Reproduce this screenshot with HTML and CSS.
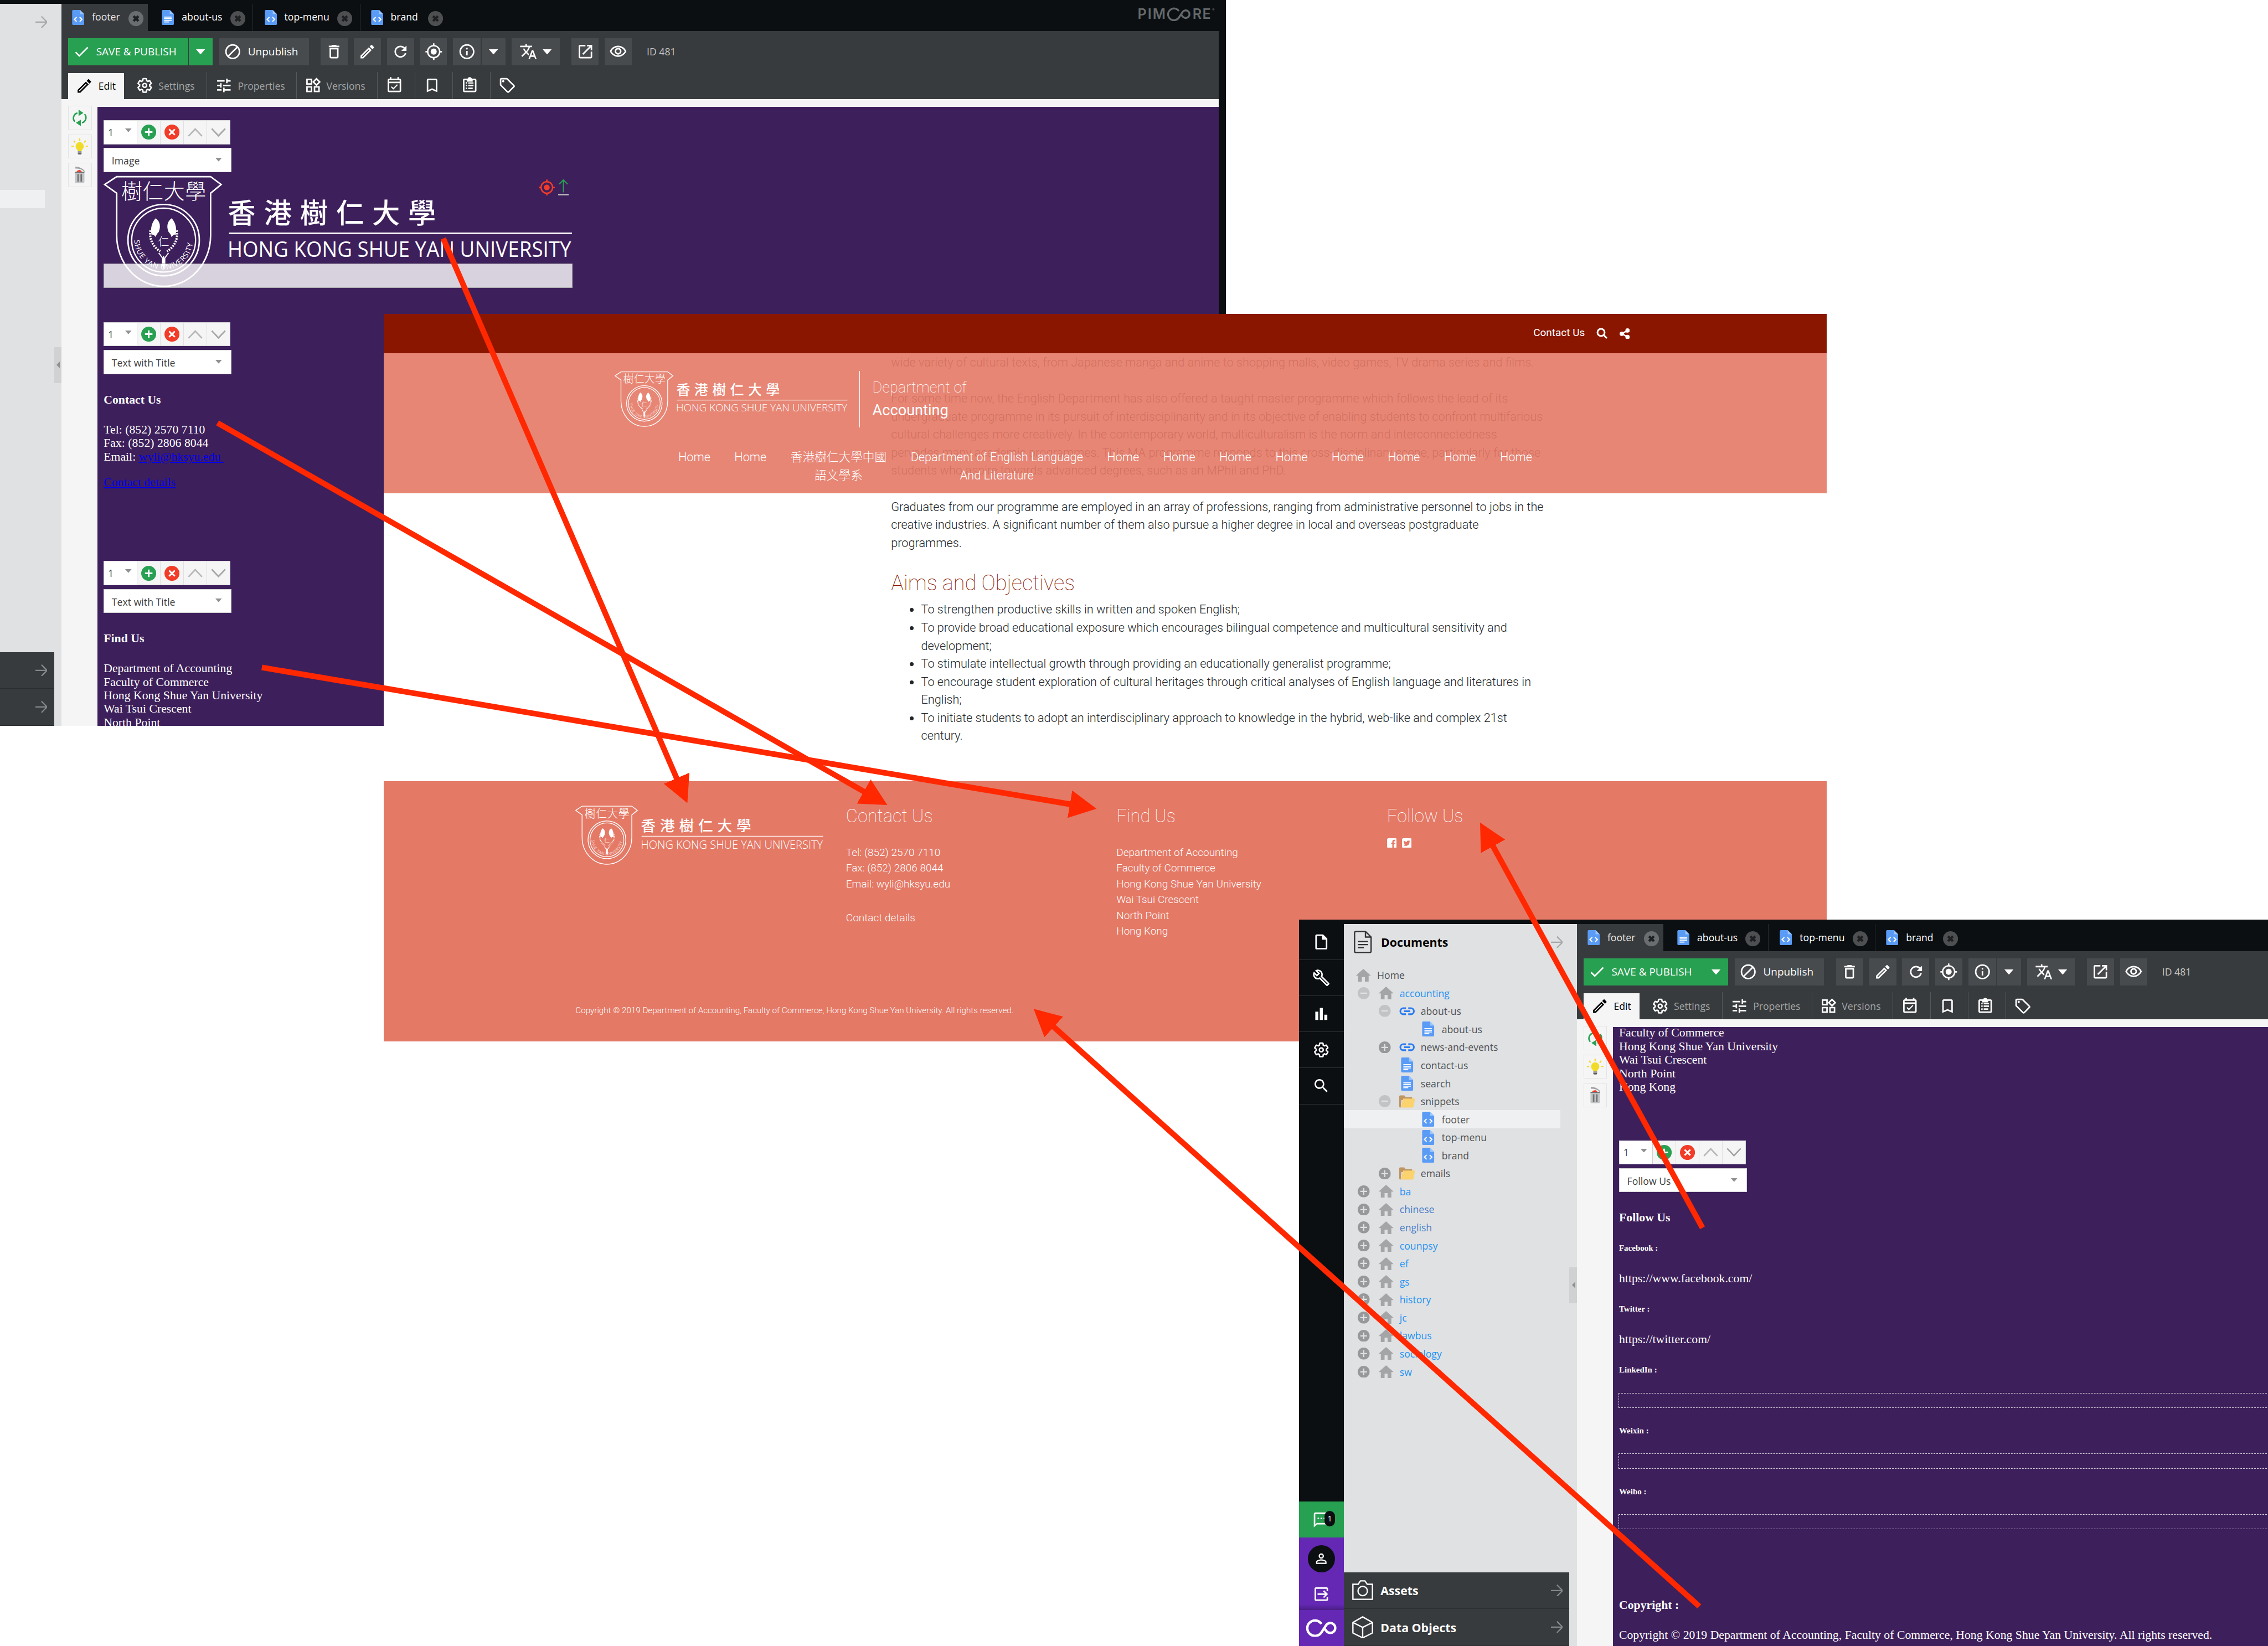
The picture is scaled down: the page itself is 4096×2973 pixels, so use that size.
FILE: index.html
```html
<!DOCTYPE html>
<html lang="en">
<head>
<meta charset="utf-8">
<title>Footer snippet guide</title>
<link rel="stylesheet" href="styles.css">
</head>
<body>
<svg class="defs" aria-hidden="true">
  <symbol id="i-check" viewBox="0 0 24 24"><path d="M9 16.2L4.8 12l-1.4 1.4L9 19 21 7l-1.4-1.4L9 16.2z"/></symbol>
  <symbol id="i-block" viewBox="0 0 24 24"><path d="M12 2C6.48 2 2 6.48 2 12s4.48 10 10 10 10-4.48 10-10S17.52 2 12 2zM4 12c0-4.42 3.58-8 8-8 1.85 0 3.55.63 4.9 1.69L5.69 16.9C4.63 15.55 4 13.85 4 12zm8 8c-1.85 0-3.55-.63-4.9-1.69L18.31 7.1C19.37 8.45 20 10.15 20 12c0 4.42-3.58 8-8 8z"/></symbol>
  <symbol id="i-trash" viewBox="0 0 24 24"><path d="M6 19c0 1.1.9 2 2 2h8c1.1 0 2-.9 2-2V7H6v12zM8 9h8v10H8V9zm7.5-5l-1-1h-5l-1 1H5v2h14V4z"/></symbol>
  <symbol id="i-edit" viewBox="0 0 24 24"><path d="M14.06 9.02l.92.92L5.92 19H5v-.92l9.06-9.06M17.66 3c-.25 0-.51.1-.7.29l-1.83 1.83 3.75 3.75 1.83-1.83c.39-.39.39-1.02 0-1.41l-2.34-2.34c-.2-.2-.45-.29-.71-.29zm-3.6 3.19L3 17.25V21h3.75L17.81 9.94l-3.75-3.75z"/></symbol>
  <symbol id="i-refresh" viewBox="0 0 24 24"><path d="M17.65 6.35C16.2 4.9 14.21 4 12 4c-4.42 0-7.99 3.58-7.99 8s3.57 8 7.99 8c3.73 0 6.84-2.55 7.73-6h-2.08c-.82 2.33-3.04 4-5.65 4-3.31 0-6-2.69-6-6s2.69-6 6-6c1.66 0 3.14.69 4.22 1.78L13 11h7V4l-2.35 2.35z"/></symbol>
  <symbol id="i-target" viewBox="0 0 24 24"><path d="M12 8c-2.21 0-4 1.79-4 4s1.79 4 4 4 4-1.79 4-4-1.79-4-4-4zm8.94 3c-.46-4.17-3.77-7.48-7.94-7.94V1h-2v2.06C6.83 3.52 3.52 6.83 3.06 11H1v2h2.06c.46 4.17 3.77 7.48 7.94 7.94V23h2v-2.06c4.17-.46 7.48-3.77 7.94-7.94H23v-2h-2.06zM12 19c-3.87 0-7-3.13-7-7s3.13-7 7-7 7 3.13 7 7-3.13 7-7 7z"/></symbol>
  <symbol id="i-info" viewBox="0 0 24 24"><path d="M11 7h2v2h-2zm0 4h2v6h-2zm1-9C6.48 2 2 6.48 2 12s4.48 10 10 10 10-4.48 10-10S17.52 2 12 2zm0 18c-4.41 0-8-3.59-8-8s3.59-8 8-8 8 3.59 8 8-3.59 8-8 8z"/></symbol>
  <symbol id="i-translate" viewBox="0 0 24 24"><path d="M12.87 15.07l-2.54-2.51.03-.03c1.74-1.94 2.98-4.17 3.71-6.53H17V4h-7V2H8v2H1v1.99h11.17C11.5 7.92 10.44 9.75 9 11.35 8.07 10.32 7.3 9.19 6.69 8h-2c.73 1.63 1.73 3.17 2.98 4.56l-5.09 5.02L4 19l5-5 3.11 3.11.76-2.04zM18.5 10h-2L12 22h2l1.12-3h4.75L21 22h2l-4.5-12zm-2.62 7l1.62-4.33L19.12 17h-3.24z"/></symbol>
  <symbol id="i-open" viewBox="0 0 24 24"><path d="M19 19H5V5h7V3H5c-1.11 0-2 .9-2 2v14c0 1.1.89 2 2 2h14c1.1 0 2-.9 2-2v-7h-2v7zM14 3v2h3.59l-9.83 9.83 1.41 1.41L19 6.41V10h2V3h-7z"/></symbol>
  <symbol id="i-eye" viewBox="0 0 24 24"><path d="M12 6c3.79 0 7.17 2.13 8.82 5.5C19.17 14.87 15.79 17 12 17s-7.17-2.13-8.82-5.5C4.83 8.13 8.21 6 12 6m0-2C7 4 2.73 7.11 1 11.5 2.73 15.89 7 19 12 19s9.27-3.11 11-7.5C21.27 7.11 17 4 12 4zm0 5c1.38 0 2.5 1.12 2.5 2.5S13.38 14 12 14s-2.5-1.12-2.5-2.5S10.62 9 12 9m0-2c-2.48 0-4.5 2.02-4.5 4.5S9.52 16 12 16s4.5-2.02 4.5-4.5S14.48 7 12 7z"/></symbol>
  <symbol id="i-gear" viewBox="0 0 24 24"><g fill="none" stroke="currentColor" stroke-width="2.1" transform="translate(1.2 1.2) scale(.9)"><path d="M19.43 12.98c.04-.32.07-.64.07-.98s-.03-.66-.07-.98l2.11-1.65c.19-.15.24-.42.12-.64l-2-3.46c-.12-.22-.39-.3-.61-.22l-2.49 1c-.52-.4-1.08-.73-1.69-.98l-.38-2.65C14.46 2.18 14.25 2 14 2h-4c-.25 0-.46.18-.49.42l-.38 2.65c-.61.25-1.17.59-1.69.98l-2.49-1c-.23-.09-.49 0-.61.22l-2 3.46c-.13.22-.07.49.12.64l2.11 1.65c-.04.32-.07.65-.07.98s.03.66.07.98l-2.11 1.65c-.19.15-.24.42-.12.64l2 3.46c.12.22.39.3.61.22l2.49-1c.52.4 1.08.73 1.69.98l.38 2.65c.03.24.24.42.49.42h4c.25 0 .46-.18.49-.42l.38-2.65c.61-.25 1.17-.59 1.69-.98l2.49 1c.23.09.49 0 .61-.22l2-3.46c.12-.22.07-.49-.12-.64l-2.11-1.65z"/><circle cx="12" cy="12" r="2.9"/></g></symbol>
  <symbol id="i-tune" viewBox="0 0 24 24"><path d="M3 17v2h6v-2H3zM3 5v2h10V5H3zm10 16v-2h8v-2h-8v-2h-2v6h2zM7 9v2H3v2h4v2h2V9H7zm14 4v-2H11v2h10zm-6-4h2V7h4V5h-4V3h-2v6z"/></symbol>
  <symbol id="i-widgets" viewBox="0 0 24 24"><path d="M16.66 4.52l2.83 2.83-2.83 2.83-2.83-2.83 2.83-2.83M9 5v4H5V5h4m10 10v4h-4v-4h4M9 15v4H5v-4h4m7.66-13.31L11 7.34 16.66 13l5.66-5.66-5.66-5.65zM11 3H3v8h8V3zm10 10h-8v8h8v-8zm-10 0H3v8h8v-8z"/></symbol>
  <symbol id="i-calendar" viewBox="0 0 24 24"><path fill-rule="evenodd" d="M16.53 11.56L15.47 10.5l-4.88 4.88-2.12-2.12-1.06 1.06L10.59 17.5l5.94-5.94zM19 3h-1V1h-2v2H8V1H6v2H5c-1.1 0-2 .9-2 2v14c0 1.1.9 2 2 2h14c1.1 0 2-.9 2-2V5c0-1.1-.9-2-2-2zm0 16H5V9h14v10zM5 5h14v2H5z"/></symbol>
  <symbol id="i-bookmark" viewBox="0 0 24 24"><path d="M17 3H7c-1.1 0-1.99.9-1.99 2L5 21l7-3 7 3V5c0-1.1-.9-2-2-2zm0 15l-5-2.18L7 18V5h10v13z"/></symbol>
  <symbol id="i-clipboard" viewBox="0 0 24 24"><path fill-rule="evenodd" d="M10 15h6v2h-6zM10 11h7v2h-7zM10 8h7v1.500h-7zM6.800 15h1.800v2H6.800zM6.800 11h1.800v2H6.800zM6.800 7.500h1.800v2H6.800zM19 3h-4.180C14.4 1.840 13.3 1 12 1c-1.300 0-2.400.84-2.820 2H5c-1.100 0-2 .9-2 2v14c0 1.100.9 2 2 2h14c1.100 0 2-.9 2-2V5c0-1.100-.9-2-2-2zm0 16H5V5h3v2h8V5h3v14z"/></symbol>
  <symbol id="i-tag" viewBox="0 0 24 24"><path d="M21.41 11.58l-9-9C12.05 2.22 11.55 2 11 2H4c-1.1 0-2 .9-2 2v7c0 .55.22 1.05.59 1.42l9 9c.36.36.86.58 1.41.58s1.05-.22 1.41-.59l7-7c.37-.36.59-.86.59-1.41s-.23-1.06-.59-1.42zM13 20.01L4 11V4h7v-.01l9 9-7 7.02z"/><circle cx="6.500" cy="6.500" r="1.500"/></symbol>
  <symbol id="i-wrench" viewBox="0 0 24 24"><path d="M22.61 18.99l-9.08-9.08c.93-2.34.45-5.1-1.44-7C9.79.61 6.21.4 3.66 2.26L7.5 6.11 6.08 7.52 2.25 3.69C.39 6.23.6 9.82 2.9 12.11c1.86 1.86 4.57 2.35 6.89 1.48l9.11 9.11c.39.39 1.02.39 1.41 0l2.3-2.3c.4-.38.4-1.01 0-1.41zm-3 1.6l-9.46-9.46c-.61.45-1.29.72-2 .82-1.36.2-2.79-.21-3.83-1.25C3.37 9.76 2.93 8.5 3 7.26l3.09 3.09 4.24-4.24-3.09-3.09c1.24-.07 2.49.37 3.44 1.31 1.08 1.08 1.49 2.57 1.24 3.96-.12.71-.42 1.37-.88 1.96l9.45 9.45-.88.89z"/></symbol>
  <symbol id="i-search" viewBox="0 0 24 24"><path d="M15.5 14h-.79l-.28-.27C15.41 12.59 16 11.11 16 9.500 16 5.91 13.09 3 9.500 3S3 5.91 3 9.500 5.91 16 9.500 16c1.61 0 3.09-.59 4.23-1.57l.27.28v.79l5 4.99L20.49 19l-4.99-5zm-6 0C7.01 14 5 11.99 5 9.500S7.01 5 9.500 5 14 7.01 14 9.500 11.99 14 9.500 14z"/></symbol>
  <symbol id="i-page" viewBox="0 0 24 24"><path fill="none" stroke="currentColor" stroke-width="2" d="M14 3H6a1 1 0 0 0-1 1v16a1 1 0 0 0 1 1h12a1 1 0 0 0 1-1V8z"/><path d="M13 3v6h6z"/></symbol>
  <symbol id="i-bars" viewBox="0 0 24 24"><path d="M4 9h4v11H4zM10 4h4v16h-4zM16 13h4v7h-4z"/></symbol>
  <symbol id="i-sms" viewBox="0 0 24 24"><path d="M20 2H4c-1.100 0-2 .9-2 2v18l4-4h14c1.100 0 2-.9 2-2V4c0-1.100-.9-2-2-2zm0 14H6l-2 2V4h16v12zM7 9h2v2H7zM11 9h2v2h-2zM15 9h2v2h-2z"/></symbol>
  <symbol id="i-person" viewBox="0 0 24 24"><path d="M12 5.900c1.160 0 2.100.94 2.100 2.100s-.94 2.100-2.100 2.100S9.900 9.160 9.900 8s.94-2.100 2.100-2.100m0 9c2.970 0 6.100 1.460 6.100 2.100v1.100H5.900V17c0-.64 3.130-2.100 6.100-2.100M12 4C9.790 4 8 5.790 8 8s1.790 4 4 4 4-1.790 4-4-1.790-4-4-4zm0 9c-2.670 0-8 1.340-8 4v3h16v-3c0-2.660-5.330-4-8-4z"/></symbol>
  <symbol id="i-exit" viewBox="0 0 24 24"><path fill="none" stroke="currentColor" stroke-width="2" d="M20 8V5a1 1 0 0 0-1-1H5a1 1 0 0 0-1 1v14a1 1 0 0 0 1 1h14a1 1 0 0 0 1-1v-3M7 12h12M15 7.500l4.500 4.500-4.500 4.500"/></symbol>
  <symbol id="i-arrow" viewBox="0 0 32 32"><path fill="none" stroke="currentColor" stroke-width="3.500" d="M0 16h30M16 1l15 15-15 15"/></symbol>
  <symbol id="i-caret" viewBox="0 0 24 14"><path d="M0 0h24L12 14z"/></symbol>
  <symbol id="i-close" viewBox="0 0 40 40"><circle cx="20" cy="20" r="20"/><path d="M13.500 13.500l13 13M26.500 13.500l-13 13" stroke="#1d2022" stroke-width="6.500"/></symbol>
  <symbol id="i-snippet" viewBox="0 0 32 40"><path fill="#5a9cf5" d="M3 0h18l11 11v26a3 3 0 0 1-3 3H3a3 3 0 0 1-3-3V3a3 3 0 0 1 3-3z"/><path fill="#9cc5ff" d="M21 0l11 11H21z"/><path fill="none" stroke="#fff" stroke-width="3" d="M12 19l-6 6 6 6M20 19l6 6-6 6"/></symbol>
  <symbol id="i-doc" viewBox="0 0 32 40"><path fill="#5a9cf5" d="M3 0h18l11 11v26a3 3 0 0 1-3 3H3a3 3 0 0 1-3-3V3a3 3 0 0 1 3-3z"/><path fill="#9cc5ff" d="M21 0l11 11H21z"/><path fill="none" stroke="#fff" stroke-width="2.500" d="M6 19h20M6 23.500h20M6 28h20M6 32h13"/></symbol>
  <symbol id="i-house" viewBox="0 0 40 34"><path d="M20 0l20 18h-6v16H24V22h-8v12H6V18H0z"/></symbol>
  <symbol id="i-link" viewBox="0 0 42 22"><g fill="none" stroke="#2a7cf0" stroke-width="4.500"><path d="M18 3h-7a8 8 0 0 0 0 16h7M24 3h7a8 8 0 0 1 0 16h-7M13 11h16"/></g></symbol>
  <symbol id="i-folder" viewBox="0 0 44 34"><path fill="#bf9564" d="M0 3a3 3 0 0 1 3-3h11l4 5h18v8H6L4 34H3a3 3 0 0 1-3-3z"/><path fill="#fad26e" d="M11 9h33l-4 22a3 3 0 0 1-3 3H5z"/></symbol>
  <symbol id="i-plus" viewBox="0 0 32 32"><circle cx="16" cy="16" r="16"/><path stroke="#e0e1e3" stroke-width="3.500" d="M16 7v18M7 16h18"/></symbol>
  <symbol id="i-minus" viewBox="0 0 32 32"><circle cx="16" cy="16" r="16"/><path stroke="#e0e1e3" stroke-width="3.500" d="M7 16h18"/></symbol>
  <symbol id="i-add" viewBox="0 0 40 40"><circle cx="20" cy="20" r="20" fill="#28a052"/><path stroke="#fff" stroke-width="4.500" d="M20 10v20M10 20h20"/></symbol>
  <symbol id="i-remove" viewBox="0 0 40 40"><circle cx="20" cy="20" r="20" fill="#f23c28"/><path stroke="#fff" stroke-width="4.500" d="M12.500 12.500l15 15M27.500 12.500l-15 15"/></symbol>
  <symbol id="i-up" viewBox="0 0 40 24"><path fill="none" stroke="#b6b7b8" stroke-width="4" d="M2 22L20 3l18 19"/></symbol>
  <symbol id="i-down" viewBox="0 0 40 24"><path fill="none" stroke="#a3a5a7" stroke-width="4" d="M2 2l18 19L38 2"/></symbol>
  <symbol id="i-sync" viewBox="0 0 44 44"><g fill="none" stroke="#28a052" stroke-width="4"><path d="M9 32A14 14 0 0 1 16 9M35 12a14 14 0 0 1-7 23"/></g><path fill="#28a052" d="M19 0l13 9-13 8zM25 44l-13-9 13-8z"/></symbol>
  <symbol id="i-bulb" viewBox="0 0 44 44"><path fill="#f0dc28" d="M22 10a11 11 0 0 1 11 11c0 6-5 8-6 13H17c-1-5-6-7-6-13a11 11 0 0 1 11-11z"/><path fill="none" stroke="#f0dc28" stroke-width="3.500" d="M22 0v7M6 6l4 5M38 6l-4 5M0 21h6M38 21h6"/><path fill="#9a9c9e" d="M17 34h10v4H17zM18 41h8v3h-8z"/><path fill="#4d5052" d="M17 38h10v3H17z"/></symbol>
  <symbol id="i-bin" viewBox="0 0 30 42"><path fill="#c2c4c5" d="M3 16h24v23a3 3 0 0 1-3 3H6a3 3 0 0 1-3-3z"/><path fill="#f23c28" d="M7 13c2-5 6-3 7-5 3 1 5 2 7 5z"/><path fill="#707274" d="M3 13h24v3H3zM9 19h4v19H9zM17 19h4v19h-4z"/><path fill="#a0a2a4" d="M4 0c10 0 22 6 24 12l-2 1C22 7 14 5 4 5z"/></symbol>
  <symbol id="i-infinity" viewBox="0 0 81 48"><path fill="none" stroke="currentColor" stroke-width="6.500" d="M40.500 13.500A20.500 20.500 0 1 0 40.500 36L54 15.700A13.200 13.200 0 1 1 54.200 32.800L49.500 27"/></symbol>
  <symbol id="logo" viewBox="0 0 1246 298">
    <g fill="none" stroke="currentColor" stroke-width="4">
      <path d="M34 3H284L312 24 284 47V160A125 135 0 0 1 34 160V47L2 24Z"/>
      <circle cx="159" cy="172" r="95"/><circle cx="159" cy="172" r="85" stroke-width="3.500"/>
      <path d="M333 154H1246"/>
      <path stroke-width="3" d="M146 206l10 14v22M172 206l-10 14v22M159 214v34"/>
      <path stroke-width="6" stroke-dasharray="4 3" d="M124 146c-4 20 4 42 26 56M194 146c4 20-4 42-26 56"/>
    </g>
    <g fill="currentColor">
      <path d="M138 114c13 10 13 24 8 36-3 4-6 6-8 14-4-6-8-8-11-6-4-14 0-34 11-44zM180 114c-13 10-13 24-8 36 3 4 6 6 8 14 4-6 8-8 11-6 4-14 0-34-11-44z"/>
      <text x="159" y="187" font-size="30" text-anchor="middle" class="logo-serif">仁</text>
      <text x="46" y="62" font-size="56" textLength="226" class="logo-serif">樹仁大學</text>
      <text x="330" y="127" font-size="74" letter-spacing="22" class="logo-cjk">香港樹仁大學</text>
      <text x="329" y="216" font-size="56" textLength="915" lengthAdjust="spacingAndGlyphs" class="logo-latin">HONG KONG SHUE YAN UNIVERSITY</text>
      <path id="seal" fill="none" d="M81 172A78 78 0 0 0 237 172"/>
      <text font-size="20" class="logo-latin"><textPath href="#seal" textLength="236">SHUE YAN UNIVERSITY</textPath></text>
    </g>
  </symbol>
</svg>

<main class="canvas">

  <!-- Footer snippet editor, top of the document -->
  <section class="editor editor-top">
    <nav class="rail"></nav>
    <aside class="tree">
      <header class="tree-head"><svg class="go"><use href="#i-arrow"/></svg></header>
      <ul class="nodes"><li class="node blank"></li><li class="node blank"></li><li class="node blank"></li><li class="node blank"></li><li class="node blank"></li><li class="node blank"></li><li class="node blank"></li><li class="node blank"></li><li class="node selected"></li></ul>
      <div class="drawer"><svg class="go"><use href="#i-arrow"/></svg></div>
      <div class="drawer"><svg class="go"><use href="#i-arrow"/></svg></div>
    </aside>
    <div class="split"><span class="handle"></span></div>
    <div class="work">
      <div class="tabs">
        <div class="tab active"><svg class="file"><use href="#i-snippet"/></svg><span>footer</span><svg class="x"><use href="#i-close"/></svg></div>
        <div class="tab wide"><svg class="file"><use href="#i-doc"/></svg><span>about-us</span><svg class="x"><use href="#i-close"/></svg></div>
        <div class="tab"><svg class="file"><use href="#i-snippet"/></svg><span>top-menu</span><svg class="x"><use href="#i-close"/></svg></div>
        <div class="tab last"><svg class="file"><use href="#i-snippet"/></svg><span>brand</span><svg class="x"><use href="#i-close"/></svg></div>
        <div class="brand"><span class="pim">PIM</span><svg class="co"><use href="#i-infinity"/></svg><span class="re">RE</span><sup>®</sup></div>
      </div>
      <div class="bars">
        <div class="toolbar">
          <div class="btn save"><svg class="ic"><use href="#i-check"/></svg><span>SAVE &amp; PUBLISH</span></div><div class="btn save drop"><svg class="caret"><use href="#i-caret"/></svg></div>
          <div class="btn unpublish"><svg class="ic"><use href="#i-block"/></svg><span>Unpublish</span></div>
          <div class="btn sq far"><svg class="ic"><use href="#i-trash"/></svg></div>
          <div class="btn sq"><svg class="ic"><use href="#i-edit"/></svg></div>
          <div class="btn sq"><svg class="ic"><use href="#i-refresh"/></svg></div>
          <div class="btn sq"><svg class="ic"><use href="#i-target"/></svg></div>
          <div class="btn sq info"><svg class="ic"><use href="#i-info"/></svg></div><div class="btn drop"><svg class="caret"><use href="#i-caret"/></svg></div>
          <div class="btn lang"><svg class="ic"><use href="#i-translate"/></svg><svg class="caret"><use href="#i-caret"/></svg></div>
          <div class="btn sq far"><svg class="ic"><use href="#i-open"/></svg></div>
          <div class="btn sq"><svg class="ic"><use href="#i-eye"/></svg></div>
          <span class="doc-id">ID 481</span>
        </div>
        <div class="subtabs">
          <div class="sub on"><svg class="ic"><use href="#i-edit"/></svg><span>Edit</span></div>
          <div class="sub settings"><svg class="ic"><use href="#i-gear"/></svg><span>Settings</span></div>
          <div class="sub properties"><svg class="ic"><use href="#i-tune"/></svg><span>Properties</span></div>
          <div class="sub versions"><svg class="ic"><use href="#i-widgets"/></svg><span>Versions</span></div>
          <div class="sub small"><svg class="ic"><use href="#i-calendar"/></svg></div>
          <div class="sub small"><svg class="ic"><use href="#i-bookmark"/></svg></div>
          <div class="sub small"><svg class="ic"><use href="#i-clipboard"/></svg></div>
          <div class="sub small end"><svg class="ic"><use href="#i-tag"/></svg></div>
        </div>
      </div>
      <div class="stage">
        <div class="side">
          <div class="side-btn"><svg><use href="#i-sync"/></svg></div>
          <div class="side-btn"><svg><use href="#i-bulb"/></svg></div>
          <div class="side-btn"><svg><use href="#i-bin"/></svg></div>
        </div>
        <div class="page page-top">
          <div class="block">
            <div class="ctl"><span class="num">1<svg class="dn"><use href="#i-caret"/></svg></span><span><svg class="rnd"><use href="#i-add"/></svg></span><span><svg class="rnd"><use href="#i-remove"/></svg></span><span><svg class="chev"><use href="#i-up"/></svg></span><span><svg class="chev"><use href="#i-down"/></svg></span></div>
            <div class="select">Image<svg class="dn"><use href="#i-caret"/></svg></div>
          </div>
          <div class="image-field">
            <svg class="logo"><use href="#logo"/></svg>
            <div class="image-tools"><svg class="tgt"><use href="#i-target"/></svg><svg class="upl" viewBox="0 0 28 44"><path fill="none" stroke="#28a052" stroke-width="3" d="M14 36V3M3 14L14 3l11 11"/><path fill="#b5b6b8" d="M0 40h28v4H0z"/></svg></div>
            <div class="image-alt"></div>
          </div>
          <div class="block">
            <div class="ctl"><span class="num">1<svg class="dn"><use href="#i-caret"/></svg></span><span><svg class="rnd"><use href="#i-add"/></svg></span><span><svg class="rnd"><use href="#i-remove"/></svg></span><span><svg class="chev"><use href="#i-up"/></svg></span><span><svg class="chev"><use href="#i-down"/></svg></span></div>
            <div class="select">Text with Title<svg class="dn"><use href="#i-caret"/></svg></div>
          </div>
          <h4>Contact Us</h4>
          <p>Tel: (852) 2570 7110<br>Fax: (852) 2806 8044<br>Email: <a>wyli@hksyu.edu&nbsp;</a></p>
          <p class="details"><a>Contact details</a></p>
          <div class="block">
            <div class="ctl"><span class="num">1<svg class="dn"><use href="#i-caret"/></svg></span><span><svg class="rnd"><use href="#i-add"/></svg></span><span><svg class="rnd"><use href="#i-remove"/></svg></span><span><svg class="chev"><use href="#i-up"/></svg></span><span><svg class="chev"><use href="#i-down"/></svg></span></div>
            <div class="select">Text with Title<svg class="dn"><use href="#i-caret"/></svg></div>
          </div>
          <h4>Find Us</h4>
          <p>Department of Accounting<br>Faculty of Commerce<br>Hong Kong Shue Yan University<br>Wai Tsui Crescent<br>North Point</p>
        </div>
      </div>
    </div>
  </section>

  <!-- Published department site -->
  <section class="site">
    <div class="article">
      <p>wide variety of cultural texts, from Japanese manga and anime to shopping malls, video games, TV drama series and films.</p>
      <p>For some time now, the English Department has also offered a taught master programme which follows the lead of its<br>undergraduate programme in its pursuit of interdisciplinarity and in its objective of enabling students to confront multifarious<br>cultural challenges more creatively. In the contemporary world, multiculturalism is the norm and interconnectedness<br>pervades many academic programmes. This MA programme responds to this cross-disciplinary scene, particularly for those<br>students who aspire towards advanced degrees, such as an MPhil and PhD.</p>
      <p>Graduates from our programme are employed in an array of professions, ranging from administrative personnel to jobs in the<br>creative industries. A significant number of them also pursue a higher degree in local and overseas postgraduate<br>programmes.</p>
      <h2>Aims and Objectives</h2>
      <ul>
        <li>To strengthen productive skills in written and spoken English;</li>
        <li>To provide broad educational exposure which encourages bilingual competence and multicultural sensitivity and<br>development;</li>
        <li>To stimulate intellectual growth through providing an educationally generalist programme;</li>
        <li>To encourage student exploration of cultural heritages through critical analyses of English language and literatures in<br>English;</li>
        <li>To initiate students to adopt an interdisciplinary approach to knowledge in the hybrid, web-like and complex 21st<br>century.</li>
      </ul>
    </div>
    <footer class="site-footer">
      <div class="cols">
        <div class="col"><svg class="logo"><use href="#logo"/></svg></div>
        <div class="col"><h3>Contact Us</h3><p>Tel: (852) 2570 7110<br>Fax: (852) 2806 8044<br>Email: wyli@hksyu.edu</p><p>Contact details</p></div>
        <div class="col"><h3>Find Us</h3><p>Department of Accounting<br>Faculty of Commerce<br>Hong Kong Shue Yan University<br>Wai Tsui Crescent<br>North Point<br>Hong Kong</p></div>
        <div class="col"><h3>Follow Us</h3><div class="social">
          <svg viewBox="0 0 26 26"><rect width="26" height="26" rx="4" fill="#fff"/><path fill="#e47966" d="M14 26V16h-3v-4h3V9c0-3 2-5 5-5h3v4h-2c-1.500 0-2 .5-2 2v2h4l-.6 4H18v10z"/></svg>
          <svg viewBox="0 0 26 26"><rect width="26" height="26" rx="4" fill="#fff"/><path fill="#e47966" d="M4 19c5 3 16 2 16-9l2-2.500-2.500.5L21 6l-2.500 1c-2-2-6-.5-5.500 3-3 0-6-1.500-8-4-1 2-.5 4 1 5.500L4.500 11c0 2 1.500 3.500 3 4H5.500c.5 1.500 2 2.500 3.500 2.500C7.500 18.500 6 19 4 19z"/></svg>
        </div></div>
      </div>
      <p class="copyright">Copyright © 2019 Department of Accounting, Faculty of Commerce, Hong Kong Shue Yan University. All rights reserved.</p>
    </footer>
    <header class="site-header">
      <div class="topbar"><span>Contact Us</span>
        <svg class="s1" viewBox="0 0 30 30"><g fill="none" stroke="#fff" stroke-width="4.500"><circle cx="12.500" cy="12.500" r="9.500"/><path d="M19 19l9 9"/></g></svg>
        <svg class="s2" viewBox="0 0 28 30"><g fill="#fff"><circle cx="6" cy="15" r="6"/><circle cx="22" cy="6" r="6"/><circle cx="22" cy="24" r="6"/><path stroke="#fff" stroke-width="4" fill="none" d="M22 6L6 15l16 9"/></g></svg>
      </div>
      <div class="masthead">
        <div class="ident"><svg class="logo"><use href="#logo"/></svg><div class="dept">Department of<br><b>Accounting</b></div></div>
        <nav class="menu"><span>Home</span><span>Home</span><span>香港樹仁大學中國<br>語文學系</span><span>Department of English Language<br>And Literature</span><span>Home</span><span>Home</span><span>Home</span><span>Home</span><span>Home</span><span>Home</span><span>Home</span><span>Home</span></nav>
      </div>
    </header>
  </section>

  <!-- Footer snippet editor, scrolled to the end -->
  <section class="editor editor-bottom">
    <nav class="rail">
      <div class="rail-item"><svg class="ic"><use href="#i-page"/></svg></div>
      <div class="rail-item"><svg class="ic"><use href="#i-wrench"/></svg></div>
      <div class="rail-item"><svg class="ic"><use href="#i-bars"/></svg></div>
      <div class="rail-item"><svg class="ic"><use href="#i-gear"/></svg></div>
      <div class="rail-item"><svg class="ic"><use href="#i-search"/></svg></div>
      <div class="rail-sms"><svg class="ic"><use href="#i-sms"/></svg><span class="badge">1</span></div>
      <div class="rail-user"><span class="avatar"><svg><use href="#i-person"/></svg></span><svg class="exit"><use href="#i-exit"/></svg></div>
      <div class="rail-logo"><svg><use href="#i-infinity"/></svg></div>
    </nav>
    <aside class="tree">
      <header class="tree-head"><svg class="tree-icon" viewBox="0 0 48 60"><path fill="none" stroke="#303335" stroke-width="3.500" d="M31 2H6a4 4 0 0 0-4 4v48a4 4 0 0 0 4 4h36a4 4 0 0 0 4-4V17zV17h15M11 29h27M11 37h27M11 45h16"/></svg><b>Documents</b><svg class="go"><use href="#i-arrow"/></svg></header>
      <ul class="nodes">
        <li class="node l0"><svg class="nic"><use href="#i-house"/></svg>Home</li>
        <li class="node l1 site-node"><svg class="exp off"><use href="#i-minus"/></svg><svg class="nic"><use href="#i-house"/></svg>accounting</li>
        <li class="node l2"><svg class="exp off"><use href="#i-minus"/></svg><svg class="nic"><use href="#i-link"/></svg>about-us</li>
        <li class="node l3"><svg class="nic"><use href="#i-doc"/></svg>about-us</li>
        <li class="node l2"><svg class="exp"><use href="#i-plus"/></svg><svg class="nic"><use href="#i-link"/></svg>news-and-events</li>
        <li class="node l2 leaf"><svg class="nic"><use href="#i-doc"/></svg>contact-us</li>
        <li class="node l2 leaf"><svg class="nic"><use href="#i-doc"/></svg>search</li>
        <li class="node l2"><svg class="exp off"><use href="#i-minus"/></svg><svg class="nic"><use href="#i-folder"/></svg>snippets</li>
        <li class="node l3 selected"><svg class="nic"><use href="#i-snippet"/></svg>footer</li>
        <li class="node l3"><svg class="nic"><use href="#i-snippet"/></svg>top-menu</li>
        <li class="node l3"><svg class="nic"><use href="#i-snippet"/></svg>brand</li>
        <li class="node l2"><svg class="exp"><use href="#i-plus"/></svg><svg class="nic"><use href="#i-folder"/></svg>emails</li>
        <li class="node l1 site-node"><svg class="exp"><use href="#i-plus"/></svg><svg class="nic"><use href="#i-house"/></svg>ba</li>
        <li class="node l1 site-node alt"><svg class="exp"><use href="#i-plus"/></svg><svg class="nic"><use href="#i-house"/></svg>chinese</li>
        <li class="node l1 site-node alt"><svg class="exp"><use href="#i-plus"/></svg><svg class="nic"><use href="#i-house"/></svg>english</li>
        <li class="node l1 site-node"><svg class="exp"><use href="#i-plus"/></svg><svg class="nic"><use href="#i-house"/></svg>counpsy</li>
        <li class="node l1 site-node"><svg class="exp"><use href="#i-plus"/></svg><svg class="nic"><use href="#i-house"/></svg>ef</li>
        <li class="node l1 site-node"><svg class="exp"><use href="#i-plus"/></svg><svg class="nic"><use href="#i-house"/></svg>gs</li>
        <li class="node l1 site-node"><svg class="exp"><use href="#i-plus"/></svg><svg class="nic"><use href="#i-house"/></svg>history</li>
        <li class="node l1 site-node"><svg class="exp"><use href="#i-plus"/></svg><svg class="nic"><use href="#i-house"/></svg>jc</li>
        <li class="node l1 site-node"><svg class="exp"><use href="#i-plus"/></svg><svg class="nic"><use href="#i-house"/></svg>lawbus</li>
        <li class="node l1 site-node"><svg class="exp"><use href="#i-plus"/></svg><svg class="nic"><use href="#i-house"/></svg>sociology</li>
        <li class="node l1 site-node"><svg class="exp"><use href="#i-plus"/></svg><svg class="nic"><use href="#i-house"/></svg>sw</li>
      </ul>
      <div class="drawer"><svg class="drawer-icon" viewBox="0 0 56 60"><g fill="none" stroke="#fff" stroke-width="3.500"><path d="M2 14h14l6-9h12l6 9h14v40H2z"/><circle cx="28" cy="32" r="12.500"/></g></svg><b>Assets</b><svg class="go"><use href="#i-arrow"/></svg></div>
      <div class="drawer"><svg class="drawer-icon" viewBox="0 0 56 60"><path fill="none" stroke="#fff" stroke-width="3.500" stroke-linejoin="round" d="M28 2l26 15v28L28 58 2 45V17zM2 17l26 13 26-13M28 30v28"/></svg><b>Data Objects</b><svg class="go"><use href="#i-arrow"/></svg></div>
    </aside>
    <div class="split"><span class="handle"></span></div>
    <div class="work">
      <div class="tabs">
        <div class="tab active"><svg class="file"><use href="#i-snippet"/></svg><span>footer</span><svg class="x"><use href="#i-close"/></svg></div>
        <div class="tab wide"><svg class="file"><use href="#i-doc"/></svg><span>about-us</span><svg class="x"><use href="#i-close"/></svg></div>
        <div class="tab"><svg class="file"><use href="#i-snippet"/></svg><span>top-menu</span><svg class="x"><use href="#i-close"/></svg></div>
        <div class="tab last"><svg class="file"><use href="#i-snippet"/></svg><span>brand</span><svg class="x"><use href="#i-close"/></svg></div>
      </div>
      <div class="bars">
        <div class="toolbar">
          <div class="btn save"><svg class="ic"><use href="#i-check"/></svg><span>SAVE &amp; PUBLISH</span></div><div class="btn save drop"><svg class="caret"><use href="#i-caret"/></svg></div>
          <div class="btn unpublish"><svg class="ic"><use href="#i-block"/></svg><span>Unpublish</span></div>
          <div class="btn sq far"><svg class="ic"><use href="#i-trash"/></svg></div>
          <div class="btn sq"><svg class="ic"><use href="#i-edit"/></svg></div>
          <div class="btn sq"><svg class="ic"><use href="#i-refresh"/></svg></div>
          <div class="btn sq"><svg class="ic"><use href="#i-target"/></svg></div>
          <div class="btn sq info"><svg class="ic"><use href="#i-info"/></svg></div><div class="btn drop"><svg class="caret"><use href="#i-caret"/></svg></div>
          <div class="btn lang"><svg class="ic"><use href="#i-translate"/></svg><svg class="caret"><use href="#i-caret"/></svg></div>
          <div class="btn sq far"><svg class="ic"><use href="#i-open"/></svg></div>
          <div class="btn sq"><svg class="ic"><use href="#i-eye"/></svg></div>
          <span class="doc-id">ID 481</span>
        </div>
        <div class="subtabs">
          <div class="sub on"><svg class="ic"><use href="#i-edit"/></svg><span>Edit</span></div>
          <div class="sub settings"><svg class="ic"><use href="#i-gear"/></svg><span>Settings</span></div>
          <div class="sub properties"><svg class="ic"><use href="#i-tune"/></svg><span>Properties</span></div>
          <div class="sub versions"><svg class="ic"><use href="#i-widgets"/></svg><span>Versions</span></div>
          <div class="sub small"><svg class="ic"><use href="#i-calendar"/></svg></div>
          <div class="sub small"><svg class="ic"><use href="#i-bookmark"/></svg></div>
          <div class="sub small"><svg class="ic"><use href="#i-clipboard"/></svg></div>
          <div class="sub small end"><svg class="ic"><use href="#i-tag"/></svg></div>
        </div>
      </div>
      <div class="stage">
        <div class="side">
          <div class="side-btn"><svg><use href="#i-sync"/></svg></div>
          <div class="side-btn"><svg><use href="#i-bulb"/></svg></div>
          <div class="side-btn"><svg><use href="#i-bin"/></svg></div>
        </div>
        <div class="page page-bottom">
          <p class="tail">Faculty of Commerce<br>Hong Kong Shue Yan University<br>Wai Tsui Crescent<br>North Point<br>Hong Kong</p>
          <div class="block">
            <div class="ctl"><span class="num">1<svg class="dn"><use href="#i-caret"/></svg></span><span><svg class="rnd"><use href="#i-add"/></svg></span><span><svg class="rnd"><use href="#i-remove"/></svg></span><span><svg class="chev"><use href="#i-up"/></svg></span><span><svg class="chev"><use href="#i-down"/></svg></span></div>
            <div class="select">Follow Us<svg class="dn"><use href="#i-caret"/></svg></div>
          </div>
          <h4>Follow Us</h4>
          <h6>Facebook :</h6>
          <div class="value">https://www.facebook.com/</div>
          <h6>Twitter :</h6>
          <div class="value">https://twitter.com/</div>
          <h6>LinkedIn :</h6>
          <div class="field"></div>
          <h6>Weixin :</h6>
          <div class="field"></div>
          <h6>Weibo :</h6>
          <div class="field"></div>
          <h4 class="legal">Copyright :</h4>
          <p>Copyright © 2019 Department of Accounting, Faculty of Commerce, Hong Kong Shue Yan University. All rights reserved.</p>
        </div>
      </div>
    </div>
  </section>

  <!-- Arrows from each field to where it is published -->
  <svg class="arrows" viewBox="0 0 6038 4382">
    <defs><marker id="head" markerUnits="userSpaceOnUse" markerWidth="72" markerHeight="74" refX="32" refY="37" orient="auto"><path d="M0 0L72 37 0 74z" fill="#ff2800"/></marker></defs>
    <g stroke="#ff2800" stroke-width="15">
      <line x1="1180" y1="635" x2="1813.900" y2="2101.300" marker-end="url(#head)"/>
      <line x1="579" y1="1126" x2="2327.300" y2="2123.200" marker-end="url(#head)"/>
      <line x1="697" y1="1777" x2="2879.600" y2="2146.300" marker-end="url(#head)"/>
      <line x1="4532" y1="3269" x2="3959.200" y2="2225.100" marker-end="url(#head)"/>
      <line x1="4523.700" y1="4276.700" x2="2781.400" y2="2712.700" marker-end="url(#head)"/>
    </g>
  </svg>
</main>
</body>
</html>
```
FILE: styles.css
```css
* { box-sizing: border-box; }
html, body { margin: 0; background: #fff; overflow: hidden; }
svg { display: block; fill: currentColor; flex: none; }
p, h2, h3, h4, h6, ul { margin: 0; padding: 0; }
.defs { position: absolute; width: 0; height: 0; }

.canvas { position: relative; width: 6038px; height: 4382px; overflow: hidden; zoom: 0.67843; }

/* ---------- editor window ---------- */
.editor {
  position: absolute; display: flex; width: 3840px; height: 1934px; overflow: hidden;
  background: #0b0f12; padding: 12px 20px 0 0;
  font-family: "Open Sans", sans-serif; font-size: 26px; color: #fff; white-space: nowrap;
}
.editor-top { left: -576px; top: -2px; }
.editor-bottom { left: 3458px; top: 2448px; }

.rail { width: 120px; display: flex; flex-direction: column; align-items: stretch; flex: none; }
.rail > div { display: flex; align-items: center; justify-content: center; }
.rail-item { height: 96px; border-bottom: 2px solid #2c3033; }
.rail .rail-sms { height: 96px; background: #28a052; margin-top: auto; position: relative; }
.badge { position: absolute; left: 68px; top: 24px; width: 28px; height: 42px; border-radius: 14px; background: #0b0f12; font-size: 20px; line-height: 42px; text-align: center; }
.rail .rail-user { height: 192px; flex-direction: column; justify-content: flex-start; padding-top: 20px; gap: 34px; background: linear-gradient(#6428b4 92%, #4b1e87); }
.avatar { width: 72px; height: 72px; border-radius: 50%; background: #0b0f12; display: grid; place-items: center; }
.avatar svg { width: 42px; height: 42px; }
.exit { width: 48px; height: 48px; }
.rail .rail-logo { height: 96px; background: #6428b4; }
.rail-logo svg { width: 81px; height: 48px; }

.tree { width: 600px; flex: none; background: #e0e1e3; color: #4f5254; display: flex; flex-direction: column; }
.tree-head { height: 96px; margin-bottom: 16px; display: flex; align-items: center; padding: 0 18px 0 26px; color: #000; font-size: 31.5px; }
.tree-icon { width: 48px; height: 60px; margin-right: 24px; }
.go { width: 32px; height: 32px; margin-left: auto; color: #a6a8aa; }
.nodes { list-style: none; flex: 1; }
.node { height: 48px; display: flex; align-items: center; margin-right: 24px; padding-left: 32px; }
.node.selected { background: #eff0f2; }
.exp { width: 32px; height: 32px; margin: 0 24px 0 4px; color: #96989a; }
.exp.off { color: #c1c3c5; }
.nic { width: 42px; height: 34px; margin: 0 15px 0 -1px; color: #a3a5a7; }
.nic:has([href="#i-doc"]), .nic:has([href="#i-snippet"]) { height: 40px; }
.nic:has([href="#i-link"]) { height: 22px; }
.l2 { padding-left: 88px; }
.l2.leaf { padding-left: 148px; }
.l3 { padding-left: 204px; }
.site-node { color: #1e93f5; }
.site-node.alt { color: #4a7cc8; }
.drawer { height: 98px; display: flex; align-items: center; padding: 0 18px 0 22px; background: #383b3d; color: #fff; font-size: 31.5px; border-bottom: 2px solid #2b2e30; }
.drawer-icon { width: 56px; height: 60px; margin-right: 19px; }
.drawer .go { color: #85888a; }

.split { width: 20px; flex: none; background: #e0e1e3; padding-top: 914px; }
.handle { display: block; height: 96px; background: #d0d1d3; position: relative; }
.handle::before { content: ""; position: absolute; left: 6px; top: 39px; border: 9px solid transparent; border-left: 0; border-right: 10px solid #8e9092; }

.work { flex: 1; min-width: 0; display: flex; flex-direction: column; }
.tabs { height: 72px; display: flex; }
.tab { width: 285px; display: flex; align-items: center; padding: 0 20px 0 30px; border-right: 2px solid #2a2d2f; font-size: 26px; }
.tab span { flex: 1; margin-left: 20px; line-height: 70px; }
.tab.active { width: 230px; padding: 0 12px 0 28px; background: #383b3d; border: 0; color: #e6e6e6; }
.tab.wide { width: 280px; padding-left: 37px; }
.tab.last { width: 240px; border: 0; padding-left: 28px; }
.file { width: 33px; height: 40px; }
.x { width: 40px; height: 40px; color: #4d4f51; margin-top: 8px; }
.active .x { color: #6b6e70; }
.brand { margin: 0 11px 0 auto; display: flex; align-items: center; font: 600 37px Inter, sans-serif; color: #66696b; height: 54px; }
.brand .pim { letter-spacing: 3px; }
.brand .re { letter-spacing: 2px; }
.brand .co { width: 62px; height: 37px; margin: 0 5px 0 2px; }
.brand sup { font-size: 9px; align-self: flex-start; margin: 10px 0 0 2px; }

.bars { height: 182px; background: #383b3d; padding: 20px 0 0 17px; }
.toolbar { display: flex; height: 72px; align-items: stretch; }
.btn { background: #484b4d; display: flex; align-items: center; justify-content: center; margin-right: 16px; font-size: 28px; }
.btn span { line-height: 40px; }
.ic { width: 48px; height: 48px; }
.caret { width: 24px; height: 14px; }
.save { width: 320px; background: #28a052; margin: 0 1px 0 0; justify-content: flex-start; padding-left: 12px; gap: 15px; }
.drop { width: 64px; }
.save.drop { justify-content: center; padding: 0; margin-right: 18px; }
.unpublish { width: 238px; justify-content: flex-start; padding-left: 12px; gap: 16px; }
.sq { width: 72px; }
.far { margin-left: 16px; }
.info { width: 74px; margin-right: 2px; }
.lang { width: 128px; gap: 15px; }
.doc-id { line-height: 72px; margin-left: 24px; color: #c3c5c6; }
.subtabs { display: flex; height: 72px; margin-top: 18px; }
.sub { display: flex; align-items: center; border-right: 2px solid #55585a; color: #a3a6a8; gap: 13px; }
.sub .ic { color: #fff; }
.sub.on { width: 149px; margin-top: 2px; background: #f5f5f5; color: #000; border: 0; padding-left: 20px; }
.sub.on .ic { color: #000; }
.settings { width: 222px; padding-left: 31px; }
.properties { width: 238px; padding-left: 20px; }
.versions { width: 216px; padding-left: 19px; gap: 12px; }
.small { width: 100px; justify-content: center; padding-right: 10px; }
.sub.end { border: 0; }

.stage { flex: 1; min-height: 0; background: #f5f5f5; padding: 20px 0 0 17px; display: flex; }
.side { width: 79px; flex: none; display: flex; flex-direction: column; gap: 12px; margin-top: -2px; }
.side-btn { width: 63px; height: 64px; border: 2px solid #e3e4e5; display: grid; place-items: center; }
.side-btn svg { width: 44px; height: 44px; }
.page { flex: 1; min-width: 0; background: #3d1f5b; padding-left: 16px; font: 32px/36px "Liberation Serif", serif; letter-spacing: .05px; color: #fff; overflow: hidden; }
.page-top { padding-top: 36px; }
.page h4 { font-size: 32px; line-height: 36px; margin: 50px 0 44px; }
.page a { color: #0000ee; text-decoration: underline; }
.details { margin: 32px 0 192px; }
.block { font: 26px "Open Sans", sans-serif; color: #3c3e40; }
.ctl { display: flex; width: 337px; height: 64px; border: 2px solid #d6d7d8; background: #f5f5f5; margin-bottom: 10px; }
.ctl span { width: 62px; display: grid; place-items: center; border-right: 2px solid #e0e1e2; }
.ctl span:last-child { border: 0; width: 60px; }
.ctl .num { width: 88px; display: flex; align-items: center; padding-left: 10px; background: #fff; border-color: #cfd0d1; color: #46484a; font-size: 26px; }
.rnd { width: 40px; height: 40px; }
.chev { width: 40px; height: 24px; }
.dn { width: 20px; height: 10px; color: #8f9193; margin: 0 12px 10px auto; }
.select { width: 340px; height: 64px; border: 2px solid #cfd0d1; background: #fff; display: flex; align-items: center; padding: 4px 10px 0 20px; }
.select .dn { margin-bottom: 6px; }
.image-field { position: relative; width: 1248px; height: 308px; margin: 9px 0 83px; }
.image-field .logo { width: 1248px; height: 298px; }
.image-tools { position: absolute; right: 10px; top: 9px; display: flex; gap: 8px; }
.tgt { width: 46px; height: 46px; color: #f23c28; }
.upl { width: 28px; height: 44px; }
.image-alt { position: absolute; left: 0; top: 235px; width: 1248px; height: 64px; border: 2px solid #aaa9ac; background: rgba(255, 255, 255, .8); }
.tail { margin: -2px 0 124px; }
.page-bottom h4 { margin: 50px 0 51px; }
.page h6 { font-size: 22px; line-height: 24px; }
.value { margin: 51px 0; }
.field { height: 40px; margin: 49px 0 49px -2px; border: 2px dashed #d6d0dc; border-right: 0; width: 1800px; }
.page-bottom .legal { margin: 184px 0 44px; }

/* ---------- crest and wordmark ---------- */
.logo { color: #fff; }
.logo-serif { font-family: "Liberation Serif", "Noto Sans CJK TC", serif; font-weight: 300; }
.logo-cjk { font-family: "Noto Sans CJK TC", sans-serif; font-weight: 500; }
.logo-latin { font-family: "Open Sans", sans-serif; }

/* ---------- department site ---------- */
.site { position: absolute; left: 1022px; top: 836px; width: 3840px; height: 1936px; background: #fff; color: #212529; font: 300 32px/48px Roboto, "Noto Sans CJK TC", sans-serif; white-space: nowrap; display: flex; flex-direction: column; }
.article { padding: 106px 0 0 1350px; flex: 1; }
.article p { margin-bottom: 48px; }
.article h2 { font-size: 56px; line-height: 68px; font-weight: 100; color: #8a1600; margin: 0 0 14px; }
.article ul { padding-left: 80px; }
.site-header { position: absolute; left: 0; top: 0; width: 100%; color: #fff; }
.topbar { height: 104px; background: #8a1600; display: flex; align-items: center; justify-content: flex-end; padding-right: 524px; font-size: 28px; font-weight: 400; }
.topbar span { margin-top: -2px; }
.s1 { width: 30px; height: 30px; margin-left: 31px; }
.s2 { width: 27px; height: 29px; margin-left: 31px; }
.masthead { height: 374px; background: rgba(228, 121, 102, .9); padding-top: 48px; }
.ident { display: flex; margin-left: 614px; }
.ident .logo { width: 620px; height: 150px; margin-right: 32px; }
.dept { border-left: 2px solid #fff; height: 150px; padding: 15px 0 0 33px; font-size: 40px; line-height: 60px; font-weight: 100; }
.dept b { font-weight: 400; }
.menu { display: flex; justify-content: center; gap: 64px; margin-top: 56px; font-weight: 300; text-align: center; }
.site-footer { height: 692px; background: #e47966; color: #fff; padding: 64px 0 0 510px; font-size: 28px; line-height: 42px; font-weight: 300; }
.cols { display: grid; grid-template-columns: repeat(4, 720px); height: 528px; }
.col .logo { width: 660px; height: 158px; }
.col h3 { font-size: 48px; line-height: 58px; font-weight: 100; margin-bottom: 47px; }
.col p { margin-bottom: 48px; }
.social { display: flex; gap: 14px; margin-top: -18px; }
.social svg { width: 26px; height: 26px; }
.copyright { font-size: 22.4px; line-height: 36px; }

.arrows { position: absolute; left: 0; top: 0; width: 6038px; height: 4382px; }
```
